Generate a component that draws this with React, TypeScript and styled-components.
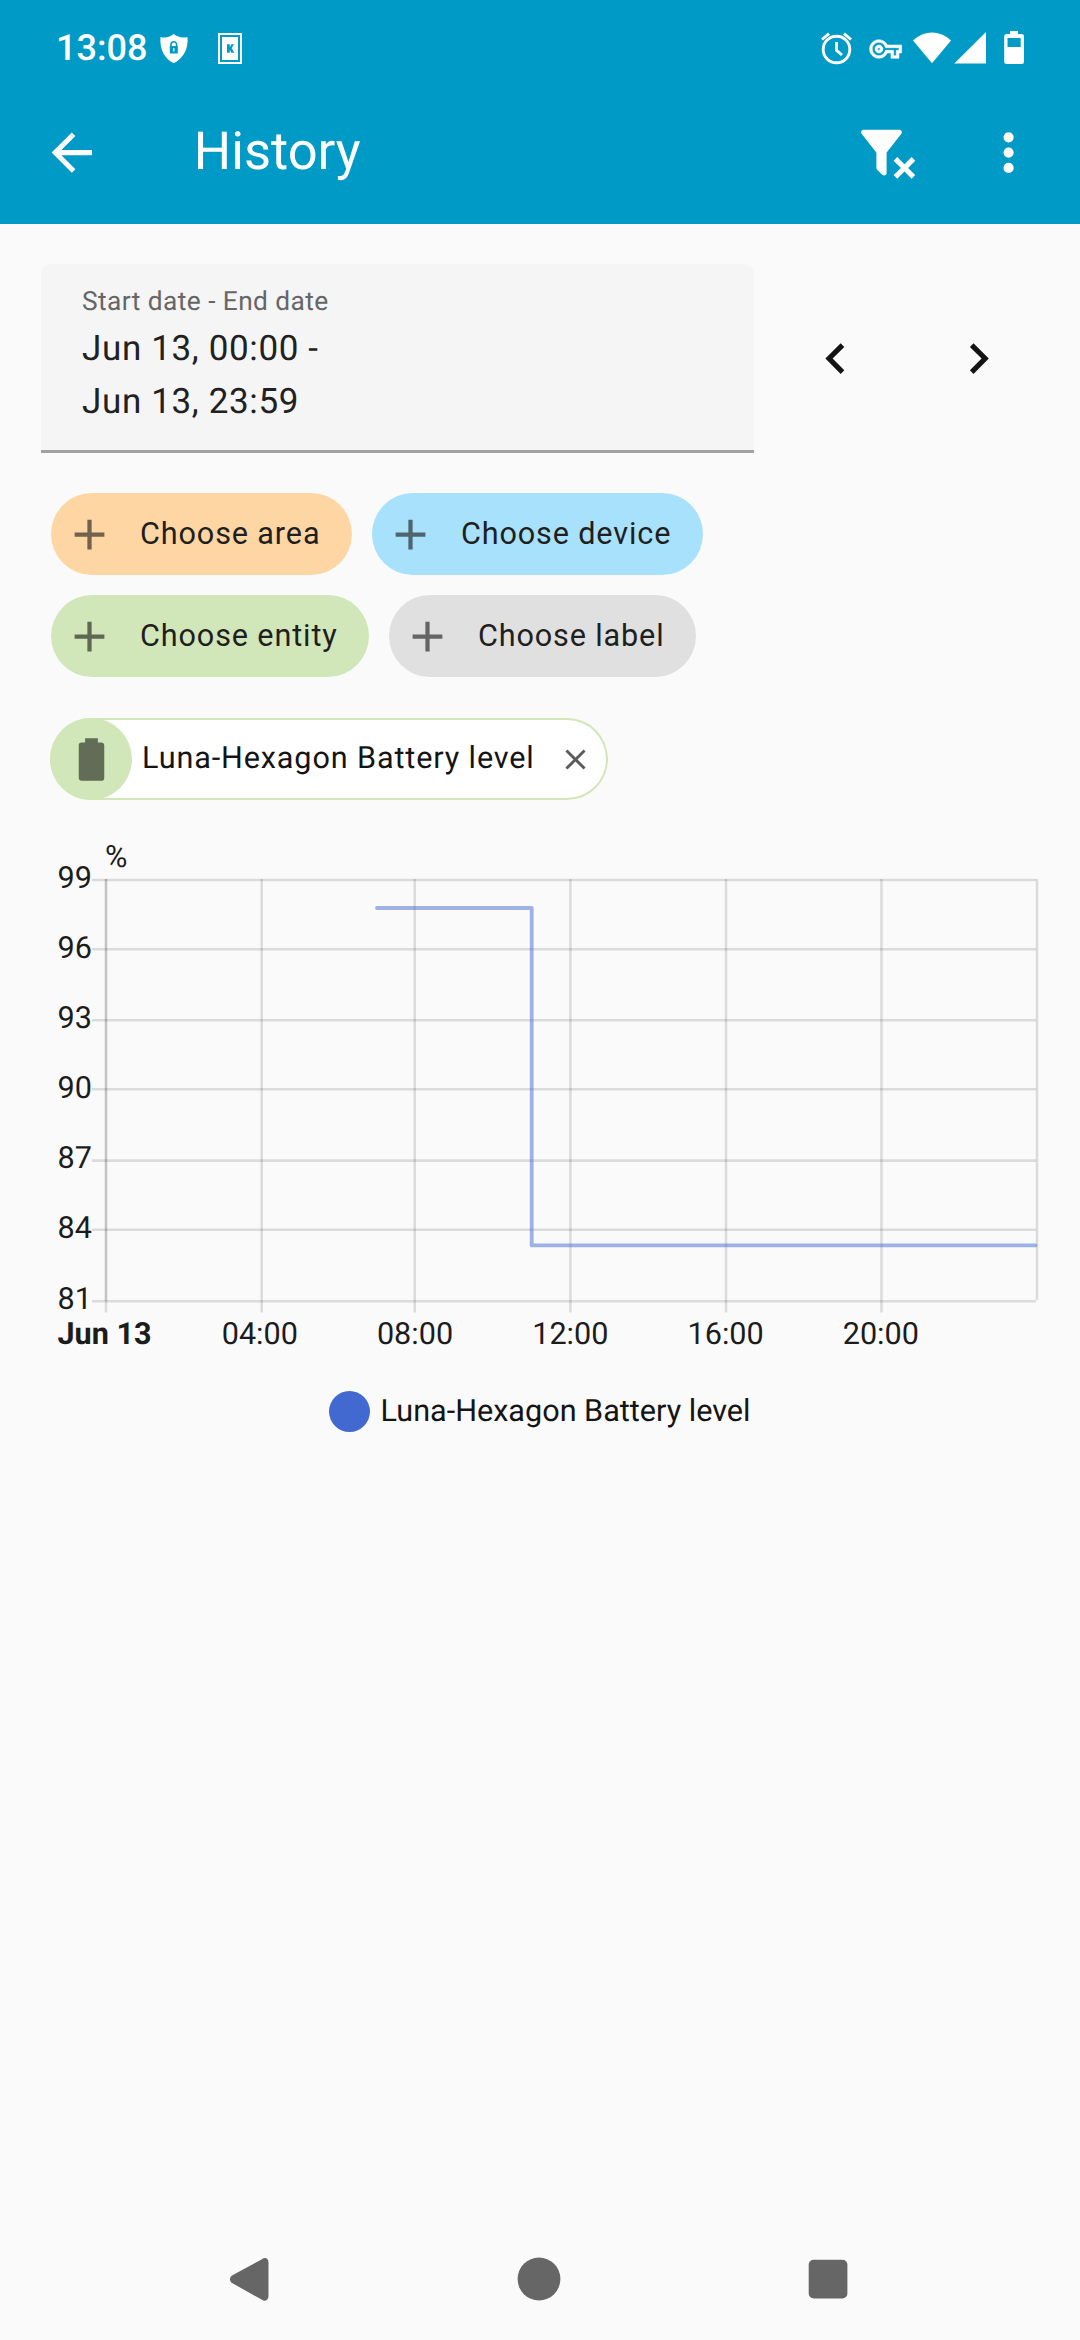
import React from "react";
import styled, { createGlobalStyle } from "styled-components";

const GlobalStyle = createGlobalStyle`
  * { box-sizing: border-box; }
  body { margin: 0; background: #fafafa; }
  button { font: inherit; border: 0; padding: 0; background: none; color: inherit; }
`;

const Screen = styled.div`
  width: 1080px;
  height: 2340px;
  display: flex;
  flex-direction: column;
  background: #fafafa;
  color: #141414;
  font-family: Roboto, "Noto Sans", sans-serif;
  text-rendering: geometricPrecision;
  overflow: hidden;
`;

const Header = styled.header`
  height: 224px;
  flex: none;
  background: #009ac7;
  color: #fff;
`;

const Icon = styled.svg`
  display: block;
  flex: none;
  fill: currentColor;
  overflow: visible;
`;

const StatusBar = styled.div`
  height: 81px;
  display: flex;
  align-items: flex-start;
  padding: 28px 56px 0 56px;
`;

const Clock = styled.span`
  width: 98px;
  font-size: 36px;
  font-weight: 500;
  line-height: 40px;
`;

const StatusGroup = styled.div<{ $end?: boolean }>`
  display: flex;
  margin-left: ${(p) => (p.$end ? "auto" : "0")};
`;

const Toolbar = styled.div`
  height: 143px;
  display: flex;
  align-items: center;
  padding: 0 41px;
`;

const IconButton = styled.button`
  display: flex;
  flex: none;
`;

const Title = styled.h1`
  flex: 1;
  margin: 0 0 4px 91.5px;
  font-size: 52.5px;
  font-weight: 400;
  line-height: 60px;
`;

const Actions = styled.div`
  display: flex;
  align-items: center;
  gap: 61px;
`;

const Filters = styled.div`
  display: flex;
  align-items: center;
  padding: 40px 41px 0;
`;

const DateField = styled.div`
  width: 713px;
  height: 189px;
  padding: 22px 41px 0;
  border-radius: 10px 10px 0 0;
  border-bottom: 3px solid #a1a1a1;
  background: #f5f5f5;
`;

const DateLabel = styled.div`
  margin-bottom: 3.5px;
  font-size: 26.3px;
  line-height: 32px;
  letter-spacing: 0.43px;
  color: #666;
`;

const DateValue = styled.div`
  font-size: 35px;
  line-height: 53px;
  letter-spacing: 0.64px;
  color: #212121;
`;

const Pager = styled.div`
  display: flex;
  gap: 82px;
  margin-left: 51px;
`;

const Chips = styled.div`
  display: flex;
  flex-wrap: wrap;
  gap: 20px 20.4px;
  padding: 40px 51px 0;
`;

const AddChip = styled.button<{ $color: string; $width: number }>`
  width: ${(p) => p.$width}px;
  height: 82px;
  display: flex;
  align-items: center;
  gap: 25px;
  padding-left: 13px;
  border-radius: 41px;
  background: ${(p) => p.$color};
  color: #1f1f1f;
`;

const ChipIcon = styled.span`
  display: flex;
  opacity: 0.6;
  color: #141414;
`;

const ChipText = styled.span`
  font-size: 30.6px;
  line-height: 40px;
  letter-spacing: 0.87px;
  white-space: nowrap;
`;

const SelectedRow = styled.div`
  display: flex;
  padding: 41px 50px 0;
`;

const EntityChip = styled.div`
  width: 558px;
  height: 82px;
  display: flex;
  align-items: center;
  border-radius: 41px;
  background: #fff;
  box-shadow: inset 0 0 0 2px #d2e7b9;
`;

const EntityBadge = styled.span`
  width: 82px;
  height: 82px;
  flex: none;
  display: flex;
  align-items: center;
  justify-content: center;
  margin-right: 10px;
  border-radius: 50%;
  background: #d2e7b9;
  color: #626c56;
`;

const RemoveButton = styled.button`
  display: flex;
  margin-left: 20.5px;
  color: #5b5b5b;
`;

const Chart = styled.svg`
  display: block;
  flex: none;
  margin-top: 30px;
  font-size: 30.6px;
  fill: #1c1c1c;
`;

const Legend = styled.div`
  display: flex;
  align-items: center;
  justify-content: center;
  gap: 10px;
  margin-top: 21px;
  font-size: 30.6px;
  line-height: 40px;
`;

const LegendText = styled.span`
  padding-top: 1px;
`;

const LegendDot = styled.span`
  width: 41px;
  height: 41px;
  border-radius: 50%;
  background: #4269d0;
`;

const NavBar = styled.nav`
  display: flex;
  align-items: center;
  justify-content: space-between;
  height: 123px;
  margin-top: auto;
  padding: 0 232px 0 229px;
  color: #666;
`;

const PLUS = "M19,13H13V19H11V13H5V11H11V5H13V11H19V13Z";

const filters = [
  { label: "Choose area", color: "#fed6a4", width: 300.5 },
  { label: "Choose device", color: "#a8e1fb", width: 331 },
  { label: "Choose entity", color: "#d2e7b9", width: 317.5 },
  { label: "Choose label", color: "#e0e0e0", width: 307 },
];

const TOP = 830;
const rows = [
  { y: 880, label: "99" },
  { y: 949.2, label: "96" },
  { y: 1020.3, label: "93" },
  { y: 1089.3, label: "90" },
  { y: 1160.6, label: "87" },
  { y: 1229.7, label: "84" },
  { y: 1301.2, label: "81" },
];
const columns = [
  { x: 261.7, textX: 259.8, label: "04:00" },
  { x: 414.7, textX: 415, label: "08:00" },
  { x: 570.4, textX: 570.3, label: "12:00" },
  { x: 726, textX: 725.6, label: "16:00" },
  { x: 881.5, textX: 880.8, label: "20:00" },
];

function HistoryChart() {
  return (
    <Chart width="1080" height="540" viewBox={`0 ${TOP} 1080 540`}>
      <g stroke="#000" strokeOpacity="0.12" strokeWidth="2.55">
        {rows.map((r) => (
          <line key={r.label} x1="92" x2="1036" y1={r.y} y2={r.y} />
        ))}
        {columns.map((c) => (
          <line key={c.label} x1={c.x} x2={c.x} y1="879" y2="1312.5" />
        ))}
        <line x1="1037" x2="1037" y1="879" y2="1300" />
        <line x1="106" x2="106" y1="1301" y2="1312.5" />
        <line x1="106" x2="106" y1="879" y2="1301" strokeOpacity="0.22" />
      </g>
      <path
        d="M377 908H531.7V1245.4H1035.5"
        fill="none"
        stroke="#4269d0"
        strokeOpacity="0.5"
        strokeWidth="3.8"
        strokeLinecap="round"
        strokeLinejoin="round"
      />
      <text x="105" y="867">%</text>
      {rows.map((r, i) => (
        <text key={r.label} x="92" y={887.9 + i * 70.1} textAnchor="end">{r.label}</text>
      ))}
      <text x="57.5" y="1343.500" fontWeight="700">Jun 13</text>
      {columns.map((c) => (
        <text key={c.label} x={c.textX} y="1344" textAnchor="middle">{c.label}</text>
      ))}
    </Chart>
  );
}

export default function App() {
  return (
    <Screen>
      <GlobalStyle />
      <Header>
        <StatusBar>
          <Clock>13:08</Clock>
          <StatusGroup>
            <Icon width="40" height="40" viewBox="154 28 40 40">
              <path d="M160.500 37C166 38.500 170 37 173.700 34C177.500 37 182 38.500 187.500 37C188.500 49 183.500 58 173.700 63.300C164 58 159.500 49 160.500 37Z" />
              <path d="M171 46.500V44.500a2.800 2.800 0 0 1 5.600 0V46.500" fill="none" stroke="#009ac7" strokeWidth="1.600" />
              <rect x="169.800" y="46" width="8" height="7.500" fill="#009ac7" />
              <rect x="173.200" y="48" width="1.200" height="3.500" />
            </Icon>
            <Icon width="60" height="40" viewBox="194 28 60 40">
              <path fillRule="evenodd" d="M218 33H242V64H218ZM220 35V62H240V35Z" />
              <rect x="222" y="37" width="16" height="23" />
              <path d="M227 44.300H229.800V47.500L231.300 44.300H234L231.700 48.300L234.300 52.700H231.300L229.800 49.800V52.700H227Z" fill="#009ac7" />
            </Icon>
          </StatusGroup>
          <StatusGroup $end>
            <Icon width="204" height="40" viewBox="820 28 204 40">
              <circle cx="836.500" cy="49.500" r="13.300" fill="none" stroke="#fff" strokeWidth="2.900" />
              <path d="M836.500 42V50.300L842 55M822 39.500L829 33.700M844 33.700L851 39.500" fill="none" stroke="#fff" strokeWidth="2.900" />
              <path
                d="M22 19h-6v-4h-2.680c-1.140 2.420-3.600 4-6.320 4-3.860 0-7-3.140-7-7s3.140-7 7-7c2.720 0 5.170 1.580 6.320 4H24v6h-2v4zm-4-2h2v-4h2v-2H11.940l-.230-.670C11.010 8.340 9.110 7 7 7c-2.760 0-5 2.240-5 5s2.240 5 5 5c2.110 0 4.010-1.340 4.710-3.330l.230-.670H18v4zM7 15c-1.650 0-3-1.350-3-3s1.350-3 3-3 3 1.350 3 3-1.350 3-3 3zm0-4c-.550 0-1 .450-1 1s.450 1 1 1 1-.450 1-1-.450-1-1-1z"
                transform="translate(869.6 33) scale(1.333)"
                stroke="#fff"
                strokeWidth="0.4"
              />
              <path d="M913 40.500C924 29.800 940 29.800 951 40.500L932 63.300Z" />
              <path d="M954.300 63.500L986 32V63.500Z" />
              <path fillRule="evenodd" d="M1010 31H1018V34H1021.500Q1024 34 1024 36.500V61.500Q1024 64 1021.500 64H1006.700Q1004.200 64 1004.200 61.500V36.500Q1004.200 34 1006.700 34H1010ZM1007.500 38V47H1020.700V38Z" />
            </Icon>
          </StatusGroup>
        </StatusBar>
        <Toolbar>
          <IconButton aria-label="Back">
            <Icon width="61.200" height="61.200" viewBox="0 0 24 24">
              <path d="M20,11V13H8L13.500,18.500L12.080,19.920L4.160,12L12.080,4.080L13.500,5.500L8,11H20Z" />
            </Icon>
          </IconButton>
          <Title>History</Title>
          <Actions>
            <IconButton aria-label="Clear filters">
              <Icon width="61.200" height="61.200" viewBox="0 0 24 24">
                <path d="M14.760,20.830L17.600,18L14.760,15.170L16.170,13.760L19,16.570L21.830,13.760L23.240,15.170L20.430,18L23.240,20.830L21.830,22.240L19,19.400L16.170,22.240L14.760,20.830M12,12V19.880C12.040,20.180 11.940,20.500 11.710,20.710C11.320,21.100 10.690,21.100 10.300,20.710L8.290,18.700C8.060,18.470 7.960,18.160 8,17.870V12H7.970L2.210,4.620C1.870,4.190 1.950,3.560 2.380,3.220C2.570,3.080 2.780,3 3,3V3H17V3C17.220,3 17.430,3.080 17.620,3.220C18.050,3.560 18.130,4.190 17.790,4.620L12.030,12H12Z" />
              </Icon>
            </IconButton>
            <IconButton aria-label="More options">
              <Icon width="61.200" height="61.200" viewBox="0 0 24 24">
                <path d="M12,16A2,2 0 0,1 14,18A2,2 0 0,1 12,20A2,2 0 0,1 10,18A2,2 0 0,1 12,16M12,10A2,2 0 0,1 14,12A2,2 0 0,1 12,14A2,2 0 0,1 10,12A2,2 0 0,1 12,10M12,4A2,2 0 0,1 14,6A2,2 0 0,1 12,8A2,2 0 0,1 10,6A2,2 0 0,1 12,4Z" />
              </Icon>
            </IconButton>
          </Actions>
        </Toolbar>
      </Header>

      <Filters>
        <DateField>
          <DateLabel>Start date - End date</DateLabel>
          <DateValue>Jun 13, 00:00 -</DateValue>
          <DateValue>Jun 13, 23:59</DateValue>
        </DateField>
        <Pager>
          <IconButton aria-label="Previous">
            <Icon width="61.200" height="61.200" viewBox="0 0 24 24">
              <path d="M15.410,16.580L10.830,12L15.410,7.410L14,6L8,12L14,18L15.410,16.580Z" />
            </Icon>
          </IconButton>
          <IconButton aria-label="Next">
            <Icon width="61.200" height="61.200" viewBox="0 0 24 24">
              <path d="M8.590,16.580L13.170,12L8.590,7.410L10,6L16,12L10,18L8.590,16.580Z" />
            </Icon>
          </IconButton>
        </Pager>
      </Filters>

      <Chips>
        {filters.map((f) => (
          <AddChip key={f.label} $color={f.color} $width={f.width}>
            <ChipIcon>
              <Icon width="51" height="51" viewBox="0 0 24 24">
                <path d={PLUS} />
              </Icon>
            </ChipIcon>
            <ChipText>{f.label}</ChipText>
          </AddChip>
        ))}
      </Chips>

      <SelectedRow>
        <EntityChip>
          <EntityBadge>
            <Icon width="51" height="51" viewBox="0 0 24 24">
              <path d="M16.670,4H15V2H9V4H7.330A1.330,1.330 0 0,0 6,5.330V20.670C6,21.400 6.600,22 7.330,22H16.670A1.330,1.330 0 0,0 18,20.670V5.330C18,4.600 17.400,4 16.670,4Z" />
            </Icon>
          </EntityBadge>
          <ChipText>Luna-Hexagon Battery level</ChipText>
          <RemoveButton aria-label="Remove">
            <Icon width="41" height="41" viewBox="0 0 24 24">
              <path d="M17.900 7.300L16.700 6.100L12 10.800L7.300 6.100L6.100 7.300L10.800 12L6.100 16.700L7.300 17.900L12 13.200L16.700 17.900L17.900 16.700L13.200 12Z" />
            </Icon>
          </RemoveButton>
        </EntityChip>
      </SelectedRow>

      <HistoryChart />

      <Legend>
        <LegendDot />
        <LegendText>Luna-Hexagon Battery level</LegendText>
      </Legend>

      <NavBar>
        <Icon width="40" height="44" viewBox="229 2256 40 44">
          <path d="M262 2258.200C264.500 2256 268.500 2257 268.500 2261.500V2295C268.500 2299.500 264.500 2301 262 2298.800L232 2282C229.300 2280 229.300 2276.500 232 2274.500Z" />
        </Icon>
        <Icon width="44" height="44" viewBox="0 0 44 44">
          <circle cx="22" cy="22" r="21.400" />
        </Icon>
        <Icon width="40" height="40" viewBox="0 0 40 40">
          <rect x="0.700" y="0.700" width="38.700" height="38.700" rx="5" />
        </Icon>
      </NavBar>
    </Screen>
  );
}
